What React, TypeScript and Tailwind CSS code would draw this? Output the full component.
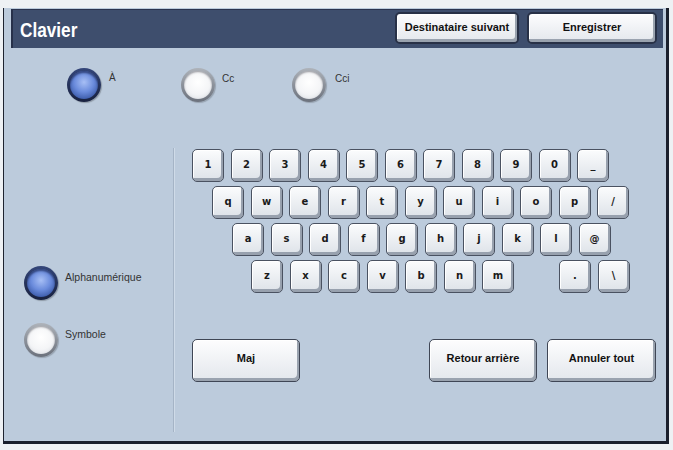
import React from "react";

const keyRows: (string | null)[][] = [
  ["1", "2", "3", "4", "5", "6", "7", "8", "9", "0", "_"],
  ["q", "w", "e", "r", "t", "y", "u", "i", "o", "p", "/"],
  ["a", "s", "d", "f", "g", "h", "j", "k", "l", "@"],
  ["z", "x", "c", "v", "b", "n", "m", null, ".", "\\"],
];
const rowOffsets = ["ml-0", "ml-[20px]", "ml-[40px]", "ml-[59px]"];

function Key({ label }: { label: string | null }) {
  if (label === null) return <div className="w-[32px] h-[33px] shrink-0" />;
  return (
    <div className="w-[32px] h-[33px] shrink-0 rounded-[5px] border border-[#4a5261] bg-gradient-to-b from-[#fbfcfd] to-[#dde2e8] shadow-[inset_-2px_-3px_0_#98a1ae,inset_1px_1px_0_#ffffff] flex items-center justify-center pb-[1px]">
      <span className="font-['DejaVu_Sans',sans-serif] font-bold text-[10px] leading-none text-[#1a1a1a]">
        {label}
      </span>
    </div>
  );
}

function Radio({ selected }: { selected?: boolean }) {
  return selected ? (
    <div className="w-[34px] h-[34px] shrink-0 rounded-full bg-gradient-to-b from-[#34467a] to-[#18213f] p-[3px] shadow-[1px_1px_1px_rgba(0,0,0,0.25)]">
      <div className="w-full h-full rounded-full bg-[radial-gradient(circle_at_50%_40%,#a7bff5_0%,#6a8bdc_45%,#3b5aa8_80%,#2a4285_100%)] shadow-[inset_0_2px_2px_rgba(20,30,70,0.6)]" />
    </div>
  ) : (
    <div className="w-[34px] h-[34px] shrink-0 rounded-full bg-gradient-to-b from-[#aeb3ba] to-[#6b717c] p-[3px] shadow-[1px_1px_1px_rgba(0,0,0,0.2)]">
      <div className="w-full h-full rounded-full bg-[radial-gradient(circle_at_50%_40%,#ffffff_0%,#f4f5f7_55%,#d8dce2_100%)] shadow-[inset_0_1px_2px_rgba(60,60,70,0.5)]" />
    </div>
  );
}

function Btn({ label, className }: { label: string; className: string }) {
  return (
    <div
      className={
        "rounded-[5px] border border-[#3f4655] bg-gradient-to-b from-[#fdfdfe] to-[#e3e7ec] shadow-[inset_-2px_-3px_0_#9aa3af,inset_1px_1px_0_#ffffff] flex justify-center font-['Liberation_Sans',Arial,sans-serif] font-bold text-[11px] text-[#111] " +
        className
      }
    >
      {label}
    </div>
  );
}

export default function App() {
  return (
    <div className="w-[673px] h-[450px] bg-[#eef1f4] pt-[8px] pl-[3px] overflow-hidden">
      <div className="w-[666px] h-[436px] bg-[#bccbdc] border-l border-l-[#1e2330] border-r-[3px] border-r-[#1a1f2c] border-b-[3px] border-b-[#1a1f2c] flex flex-col">
        {/* header */}
        <div className="ml-[7px] mr-[3px] mt-[1px] h-[39px] shrink-0 bg-[#3e4e6d] border-l-[2px] border-l-[#27314a] border-t border-t-[#2b3550] flex items-start">
          <div className="pl-[7px] pt-[10px] text-white font-['Liberation_Sans',Arial,sans-serif] font-bold text-[20px] leading-[20px]">
            <span className="inline-block origin-left scale-x-[0.86]">Clavier</span>
          </div>
          <div className="ml-auto flex gap-[8px] pt-[2px] pr-[6px]">
            <Btn label="Destinataire suivant" className="w-[124px] h-[32px] items-center pb-[2px] border-[#283147] border-[2px]" />
            <Btn label="Enregistrer" className="w-[130px] h-[32px] items-center pb-[2px] border-[#283147] border-[2px]" />
          </div>
        </div>

        {/* top radios */}
        <div className="h-[92px] shrink-0 pt-[20px] pl-[63px] flex font-['Liberation_Sans',Arial,sans-serif] text-[10px] text-[#333]">
          <div className="w-[114px] flex items-start gap-[8px]">
            <Radio selected />
            <span className="pt-[4px] leading-[12px]">À</span>
          </div>
          <div className="w-[111px] flex items-start gap-[7px]">
            <Radio />
            <span className="pt-[5px] leading-[12px]">Cc</span>
          </div>
          <div className="flex items-start gap-[9px]">
            <Radio />
            <span className="pt-[5px] leading-[12px]">Cci</span>
          </div>
        </div>

        {/* lower */}
        <div className="flex-1 flex pt-[8px] pb-[9px]">
          <div className="w-[169px] shrink-0 pt-[118px] pl-[20px] flex flex-col gap-[23px] font-['Liberation_Sans',Arial,sans-serif] text-[10.5px] text-[#333]">
            <div className="flex items-start gap-[7px]">
              <Radio selected />
              <span className="pt-[5px] leading-[12px]">Alphanumérique</span>
            </div>
            <div className="flex items-start gap-[7px]">
              <Radio />
              <span className="pt-[5px] leading-[12px]">Symbole</span>
            </div>
          </div>
          <div className="flex-1 border-l border-l-[#a5b4c6] shadow-[inset_1px_0_0_#cfdbe8] pl-[18px] pt-[1px] pr-[10px] flex flex-col">
            <div className="flex flex-col gap-[4px]">
              {keyRows.map((row, i) => (
                <div key={i} className={"flex gap-[6.5px] " + rowOffsets[i]}>
                  {row.map((k, j) => (
                    <Key key={j} label={k} />
                  ))}
                </div>
              ))}
            </div>
            <div className="mt-[46px] flex">
              <Btn label="Maj" className="w-[108px] h-[43px] items-start pt-[10px]" />
              <div className="ml-auto flex gap-[10px]">
                <Btn label="Retour arrière" className="w-[108px] h-[43px] items-start pt-[10px]" />
                <Btn label="Annuler tout" className="w-[109px] h-[43px] items-start pt-[10px]" />
              </div>
            </div>
          </div>
        </div>
      </div>
    </div>
  );
}
